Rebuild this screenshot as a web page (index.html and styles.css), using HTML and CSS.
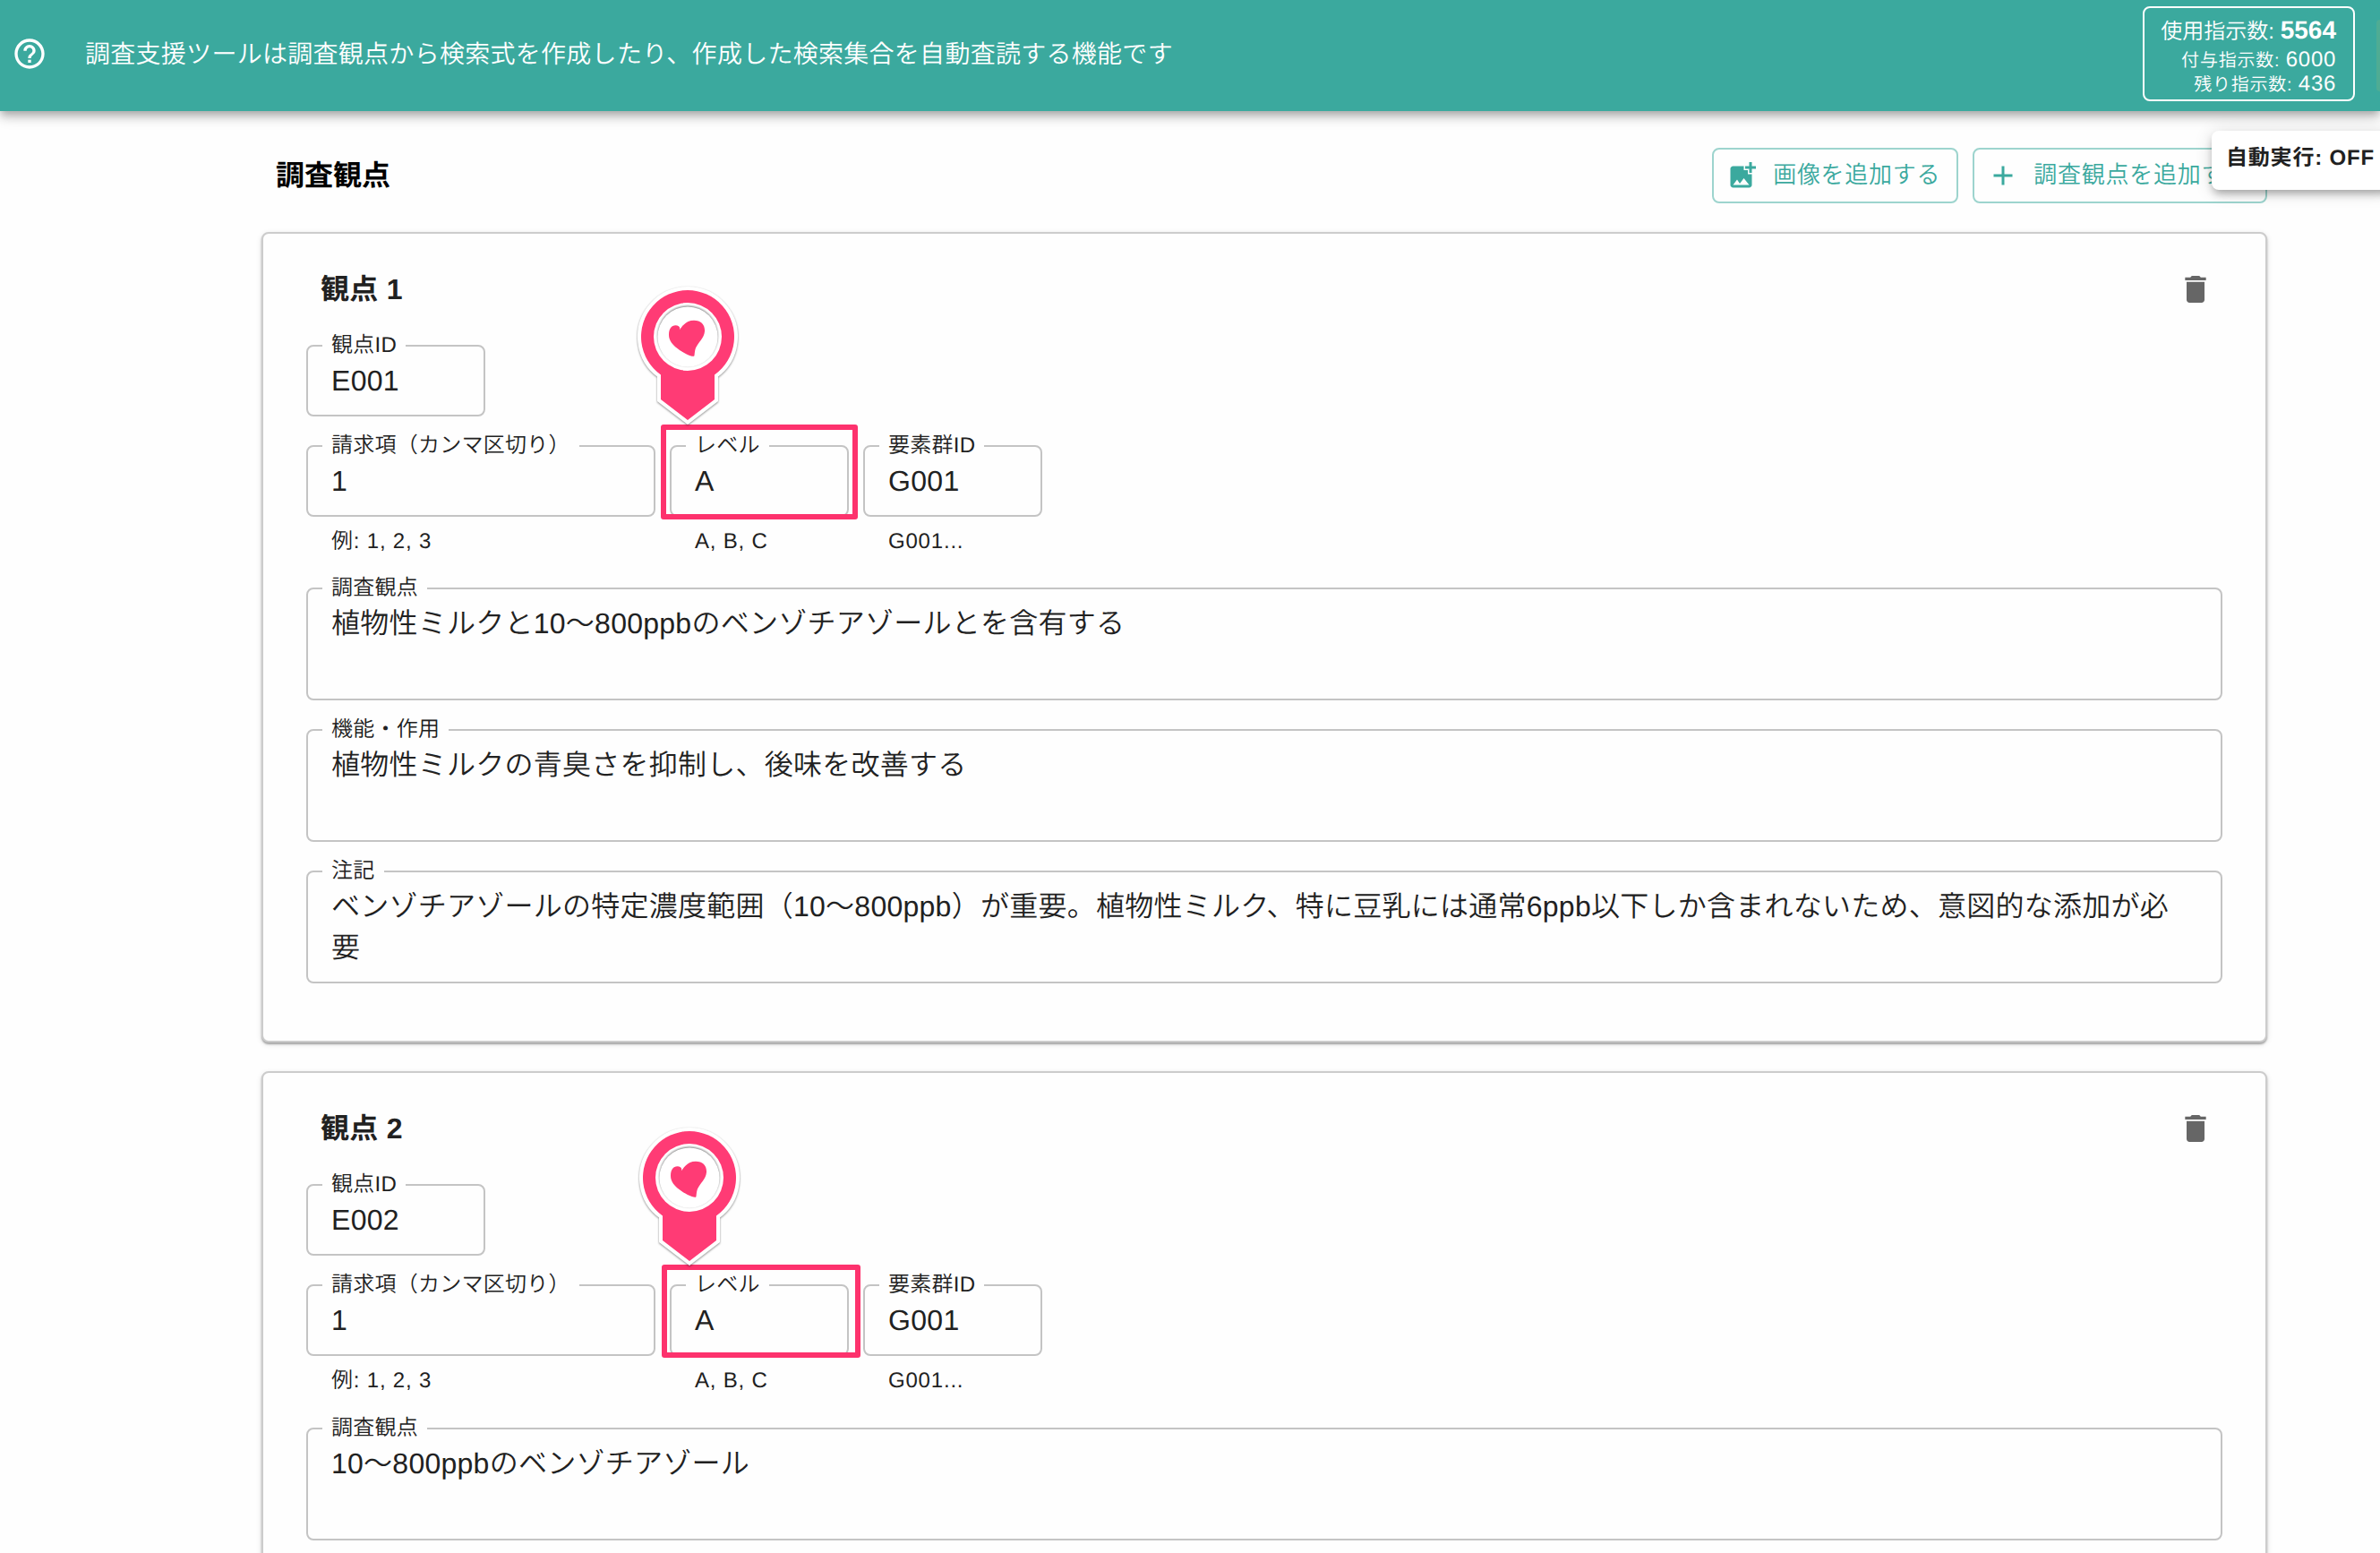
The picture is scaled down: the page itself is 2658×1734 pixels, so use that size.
FILE: index.html
```html
<!DOCTYPE html>
<html lang="ja">
<head>
    <meta charset="UTF-8">
    <meta name="viewport" content="width=device-width, initial-scale=1.0">
    <title>調査観点</title>
    <link rel="stylesheet" href="styles.css">
</head>
<body>
    <header class="header">
        <svg class="help" viewBox="0 0 24 24"><path d="M11 18h2v-2h-2v2zm1-16C6.48 2 2 6.48 2 12s4.48 10 10 10 10-4.48 10-10S17.52 2 12 2zm0 18c-4.41 0-8-3.59-8-8s3.59-8 8-8 8 3.59 8 8-3.59 8-8 8zm0-14c-2.21 0-4 1.79-4 4h2c0-1.1.9-2 2-2s2 .9 2 2c0 2-3 1.75-3 5h2c0-2.25 3-2.5 3-5 0-2.21-1.79-4-4-4z"/></svg>
        <p class="header-text">調査支援ツールは調査観点から検索式を作成したり、作成した検索集合を自動査読する機能です</p>
        <div class="usage">
            <div class="usage-main">使用指示数: <b>5564</b></div>
            <div class="usage-sub">付与指示数: <span>6000</span></div>
            <div class="usage-sub">残り指示数: <span>436</span></div>
        </div>
        <div class="avatar"></div>
    </header>
    <div class="auto-run">自動実行: OFF</div>

    <main class="main">
        <div class="toolbar">
            <h1 class="title">調査観点</h1>
            <button class="btn">
                <svg viewBox="0 0 24 24"><path d="M19 7v2.99s-1.99.01-2 0V7h-3s.01-1.99 0-2h3V2h2v3h3v2h-3zm-3 4V8h-3V5H5c-1.1 0-2 .9-2 2v12c0 1.1.9 2 2 2h12c1.1 0 2-.9 2-2v-8h-3zM5 19l3-4 2 3 3-4 4 5H5z"/></svg>
                <span>画像を追加する</span>
            </button>
            <button class="btn">
                <svg viewBox="0 0 24 24"><path d="M19 13h-6v6h-2v-6H5v-2h6V5h2v6h6v2z"/></svg>
                <span>調査観点を追加する</span>
            </button>
        </div>

        <section class="card">
            <div class="card-head">
                <h2>観点 1</h2>
                <svg class="trash" viewBox="0 0 24 24"><path d="M6 19c0 1.1.9 2 2 2h8c1.1 0 2-.9 2-2V7H6v12zM19 4h-3.5l-1-1h-5l-1 1H5v2h14V4z"/></svg>
            </div>
            <fieldset class="field short"><legend>観点ID</legend>E001</fieldset>
            <div class="row">
                <div class="col">
                    <fieldset class="field claim"><legend>請求項（カンマ区切り）</legend>1</fieldset>
                    <p class="hint">例: 1, 2, 3</p>
                </div>
                <div class="col">
                    <fieldset class="field short"><legend>レベル</legend>A</fieldset>
                    <p class="hint">A, B, C</p>
                    <div class="mark mark-1"></div>
                    <svg class="pin pin-1" viewBox="0 0 124 168">
                        <path class="pin-body" d="M32 104.5A52 52 0 1 1 92 104.5V132L62 155L32 132Z"/>
                        <circle class="pin-hole" cx="62" cy="62" r="38"/>
                        <circle class="pin-disc" cx="62" cy="62" r="33.5"/>
                        <path class="pin-heart" d="M41 60C41 53 44 49.3 48.5 49.3C52 49.3 54.3 51.5 52.8 54.5C55 52 59 43.7 69 43.7C77 43.7 81.5 48.5 81 56C80.3 63.5 74 68 71 74.5C69.5 78 70 83.6 69 83.7C66 84.5 56 79.5 50.5 75C45 71 41 66 41 60Z"/>
                    </svg>
                </div>
                <div class="col">
                    <fieldset class="field short"><legend>要素群ID</legend>G001</fieldset>
                    <p class="hint">G001...</p>
                </div>
            </div>
            <fieldset class="field area"><legend>調査観点</legend>植物性ミルクと10〜800ppbのベンゾチアゾールとを含有する</fieldset>
            <fieldset class="field area"><legend>機能・作用</legend>植物性ミルクの青臭さを抑制し、後味を改善する</fieldset>
            <fieldset class="field area"><legend>注記</legend>ベンゾチアゾールの特定濃度範囲（10〜800ppb）が重要。植物性ミルク、特に豆乳には通常6ppb以下しか含まれないため、意図的な添加が必要</fieldset>
        </section>

        <section class="card">
            <div class="card-head">
                <h2>観点 2</h2>
                <svg class="trash" viewBox="0 0 24 24"><path d="M6 19c0 1.1.9 2 2 2h8c1.1 0 2-.9 2-2V7H6v12zM19 4h-3.5l-1-1h-5l-1 1H5v2h14V4z"/></svg>
            </div>
            <fieldset class="field short"><legend>観点ID</legend>E002</fieldset>
            <div class="row">
                <div class="col">
                    <fieldset class="field claim"><legend>請求項（カンマ区切り）</legend>1</fieldset>
                    <p class="hint">例: 1, 2, 3</p>
                </div>
                <div class="col">
                    <fieldset class="field short"><legend>レベル</legend>A</fieldset>
                    <p class="hint">A, B, C</p>
                    <div class="mark mark-2"></div>
                    <svg class="pin pin-2" viewBox="0 0 124 168">
                        <path class="pin-body" d="M32 104.5A52 52 0 1 1 92 104.5V132L62 155L32 132Z"/>
                        <circle class="pin-hole" cx="62" cy="62" r="38"/>
                        <circle class="pin-disc" cx="62" cy="62" r="33.5"/>
                        <path class="pin-heart" d="M41 60C41 53 44 49.3 48.5 49.3C52 49.3 54.3 51.5 52.8 54.5C55 52 59 43.7 69 43.7C77 43.7 81.5 48.5 81 56C80.3 63.5 74 68 71 74.5C69.5 78 70 83.6 69 83.7C66 84.5 56 79.5 50.5 75C45 71 41 66 41 60Z"/>
                    </svg>
                </div>
                <div class="col">
                    <fieldset class="field short"><legend>要素群ID</legend>G001</fieldset>
                    <p class="hint">G001...</p>
                </div>
            </div>
            <fieldset class="field area"><legend>調査観点</legend>10〜800ppbのベンゾチアゾール</fieldset>
        </section>
    </main>
</body>
</html>
```
FILE: styles.css
```css
*{
    margin:0;padding:0;box-sizing:border-box;
}
body{
    height:1734px;
    overflow:hidden;
    position:relative;
    background-color:#fefefe;
    color:#212121;
    font-family:"Liberation Sans","Noto Sans CJK JP",sans-serif;
    font-weight:350;
    text-rendering:geometricPrecision;
}
.header{
    position:relative;
    height:124px;
    padding-left:13px;
    display:flex;
    align-items:center;
    background-color:#3ba99e;
    color:white;
    box-shadow:0 4px 8px -2px rgba(0,0,0,.2),0 8px 10px rgba(0,0,0,.14),0 2px 20px rgba(0,0,0,.12);
}
.help{
    width:40px;height:40px;
    fill:white;
    margin-right:42px;
    margin-bottom:4px;
}
.header-text{
    font-size:28px;
    line-height:40px;
    letter-spacing:.28px;
    padding-bottom:2px;
}
.usage{
    width:237px;height:106px;
    margin-left:auto;
    margin-right:24px;
    margin-bottom:4px;
    padding:8px 19px 0 0;
    border:2px solid white;
    border-radius:8px;
    text-align:right;
    white-space:nowrap;
}
.usage-main{
    font-size:24px;
    line-height:34px;
    margin-bottom:1px;
}
.usage-main b{
    font-size:28px;
    font-weight:700;
}
.usage-sub{
    font-size:20px;
    line-height:25px;
    letter-spacing:.8px;
}
.usage-sub span{
    font-size:24px;
    letter-spacing:.7px;
}
.avatar{
    width:4px;height:80px;
    border-radius:40px 0 0 40px;
    background-color:#4fac94;
}
.auto-run{
    position:absolute;
    left:2470px;top:146px;
    width:200px;height:66px;
    padding-left:16px;
    border-radius:8px 0 0 8px;
    background-color:white;
    font-size:24px;
    font-weight:700;
    line-height:62px;
    letter-spacing:.8px;
    white-space:nowrap;
    box-shadow:0 6px 10px -2px rgba(0,0,0,.3),0 2px 20px rgba(0,0,0,.14);
}
.main{
    width:2240px;
    margin-left:292px;
}
.toolbar{
    display:flex;
    align-items:center;
    gap:16px;
    padding:41px 0 32px 16px;
}
.title{
    margin-right:auto;
    color:black;
    font-size:32px;
    line-height:46px;
}
.btn{
    display:flex;
    align-items:center;
    height:62px;
    padding:0 18px 0 14px;
    border:2px solid #9dd4ce;
    border-radius:8px;
    background-color:transparent;
    color:#3ba99e;
    font-family:inherit;
    font-size:26px;
    font-weight:350;
    letter-spacing:.74px;
    white-space:nowrap;
}
.btn svg{
    width:36px;height:36px;
    margin-right:16px;
    fill:#3ba99e;
}
.btn span{
    padding-bottom:7px;
}
.card{
    height:905.4px;
    margin-bottom:32px;
    padding:32px 48px;
    border:2px solid #ccc;
    border-radius:8px;
    background-color:#fefefe;
    box-shadow:0 2px 2px rgba(0,0,0,.3),0 2px 6px rgba(0,0,0,.12);
}
.card-head{
    display:flex;
    align-items:center;
    justify-content:space-between;
    height:60px;
    padding:0 10px 0 16px;
    margin-bottom:32px;
}
.card-head h2{
    font-size:32px;
    line-height:46px;
    letter-spacing:.3px;
}
.trash{
    width:40px;height:40px;
    fill:#666;
}
.field{
    height:80px;
    padding:15px 26px 15px 16px;
    border:2px solid #c4c4c4;
    border-radius:8px;
    font-size:32px;
    line-height:46px;
    letter-spacing:.3px;
    text-indent:10px;
    min-width:0;
}
.field legend{
    height:2px;
    line-height:1px;
    padding:0 10px;
    font-size:24px;
    letter-spacing:.25px;
    text-indent:0;
    white-space:nowrap;
}
.short{
    width:200px;
}
.claim{
    width:390px;
}
.area{
    height:126px;
    margin-bottom:32px;
    padding-left:26px;
    text-indent:0;
    letter-spacing:.25px;
}
.area legend{
    margin-left:-10px;
}
.row{
    display:flex;
    gap:16px;
    margin:32px 0 33.2px;
}
.col{
    position:relative;
}
.hint{
    height:46px;
    padding:7.5px 0 0 28px;
    font-size:24px;
    line-height:40px;
    letter-spacing:.8px;
}
/* callouts over the level field */
.mark{
    position:absolute;
    border:6px solid #fd326d;
    border-radius:3px;
}
.mark-1{
    left:-10px;top:-23px;
    width:220px;height:106px;
}
.mark-2{
    left:-9px;top:-22px;
    width:222px;height:104px;
}
.pin{
    position:absolute;
    width:124px;height:168px;
    filter:drop-shadow(0 1px 1px rgba(0,0,0,.45));
}
.pin-1{
    left:-42px;top:-183px;
}
.pin-2{
    left:-40px;top:-181px;
}
.pin-body{
    fill:#ff3b75;
    stroke:white;
    stroke-width:8px;
    paint-order:stroke;
}
.pin-hole{
    fill:white;
}
.pin-disc{
    fill:white;
    filter:drop-shadow(0 -1px 1px rgba(0,0,0,.5));
}
.pin-heart{
    fill:#ff3b75;
}
```
